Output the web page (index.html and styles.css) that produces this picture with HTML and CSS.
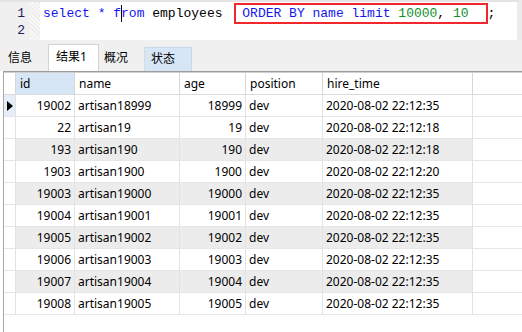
FILE: index.html
```html
<!DOCTYPE html>
<html lang="zh">
<head>
    <meta charset="UTF-8">
    <title>查询结果</title>
    <link rel="stylesheet" href="styles.css">
</head>
<body>
    <div class="editor">
        <div class="gutter">
            <div>1</div>
            <div>2</div>
        </div>
        <div class="fold"></div>
        <div class="code">
            <div class="line"><span class="kw">select</span> <span class="kw">*</span> <span class="kw">f<span class="caret"></span>rom</span> employees <span class="mark"><span class="kw">ORDER BY name limit</span> <span class="num">10000</span>, <span class="num">10</span></span>;</div>
            <div class="line"></div>
        </div>
    </div>

    <div class="tabs">
        <div class="tab">信息</div>
        <div class="tab active">结果1</div>
        <div class="tab plain">概况</div>
        <div class="tab status">状态</div>
    </div>

    <div class="grid">
        <div class="row head">
            <div class="cell ind"></div>
            <div class="cell c-id sel">id</div>
            <div class="cell c-name">name</div>
            <div class="cell c-age">age</div>
            <div class="cell c-pos">position</div>
            <div class="cell c-time">hire_time</div>
        </div>
        <div id="rows"></div>
    </div>

    <script>
        const data = [
            [19002, 'artisan18999', 18999, '2020-08-02 22:12:35'],
            [22, 'artisan19', 19, '2020-08-02 22:12:18'],
            [193, 'artisan190', 190, '2020-08-02 22:12:18'],
            [1903, 'artisan1900', 1900, '2020-08-02 22:12:20'],
            [19003, 'artisan19000', 19000, '2020-08-02 22:12:35'],
            [19004, 'artisan19001', 19001, '2020-08-02 22:12:35'],
            [19005, 'artisan19002', 19002, '2020-08-02 22:12:35'],
            [19006, 'artisan19003', 19003, '2020-08-02 22:12:35'],
            [19007, 'artisan19004', 19004, '2020-08-02 22:12:35'],
            [19008, 'artisan19005', 19005, '2020-08-02 22:12:35']
        ];

        const rows = document.getElementById('rows');
        data.forEach((r, i) => {
            const row = document.createElement('div');
            row.className = 'row';
            if (i >= 2 && i % 2 === 0) row.classList.add('alt');
            row.innerHTML =
                '<div class="cell ind">' + (i === 0 ? '<span class="arrow"></span>' : '') + '</div>' +
                '<div class="cell c-id num-cell">' + r[0] + '</div>' +
                '<div class="cell c-name">' + r[1] + '</div>' +
                '<div class="cell c-age num-cell">' + r[2] + '</div>' +
                '<div class="cell c-pos">dev</div>' +
                '<div class="cell c-time">' + r[3] + '</div>';
            if (i === 0) row.firstChild.classList.add('current');
            rows.appendChild(row);
        });
    </script>
</body>
</html>
```

FILE: styles.css
```css
body {
    margin: 0;
    width: 522px;
    height: 332px;
    overflow: hidden;
    background-color: white;
    font-family: "Noto Sans", "Noto Sans CJK SC", sans-serif;
    font-size: 12px;
    color: #000;
}

.editor {
    display: flex;
    height: 40px;
    box-sizing: border-box;
    border-top: 2px solid #e4e4e4;
    border-right: 5px solid #ececec;
    font-family: "Liberation Mono", monospace;
    font-size: 13px;
}
.gutter {
    width: 29px;
    box-sizing: border-box;
    padding: 3px 4px 0 0;
    background-color: #f0f0f0;
    text-align: right;
    color: #1c1c5c;
}
.gutter div {
    height: 17px;
    line-height: 17px;
}
.fold {
    width: 11px;
    background-color: #f7f7f7;
    background-image: repeating-linear-gradient(45deg, #ececec 0 1px, transparent 1px 3px);
}
.code {
    flex: 1;
    padding: 3px 0 0 3px;
}
.line {
    height: 17px;
    line-height: 17px;
    white-space: pre;
}
.kw {
    color: #1515f0;
}
.num {
    color: #10902a;
}
.caret {
    display: inline-block;
    width: 1px;
    height: 17px;
    margin-right: -1px;
    background-color: #000;
    vertical-align: top;
}
.mark {
    display: inline-block;
    line-height: 17px;
    margin: -2px 0 -2px 4px;
    padding: 0 17px 0 6px;
    border: 2px solid #f0282e;
}

.tabs {
    display: flex;
    align-items: flex-end;
    height: 31px;
    background-color: #f0f0f0;
}
.tab {
    height: 24px;
    line-height: 22px;
    box-sizing: border-box;
    padding-left: 8px;
}
.tab:first-child {
    width: 48px;
}
.tab.active {
    width: 51px;
    height: 27px;
    line-height: 24px;
    padding-left: 7px;
    background-color: white;
    border: 1px solid #d4d4d4;
    border-bottom: none;
}
.tab.plain {
    width: 46px;
    padding-left: 5px;
    border-right: 1px solid #dadada;
}
.tab.status {
    width: 47px;
    padding-left: 6px;
    background-color: #d7e6f6;
    border: 1px solid #c6d8ec;
    border-bottom: none;
    border-left: none;
}

.grid {
    margin-left: 3px;
    height: 261px;
    border-left: 1px solid #a8a8a8;
    border-top: 1px solid #9c9c9c;
}
.row {
    display: flex;
    height: 22px;
    line-height: 21px;
    box-sizing: border-box;
    border-bottom: 1px solid #e6e6e6;
}
.row.head {
    border-top: 1px solid #cfcfcf;
    border-bottom: 1px solid #dadada;
    height: 23px;
}
.row.alt .cell:not(.ind) {
    background-color: #ececec;
}
.cell {
    box-sizing: border-box;
    padding: 0 3px;
    border-right: 1px solid #e3e3e3;
    white-space: nowrap;
}
.head .cell {
    border-right-color: #d6d6d6;
    padding-left: 4px;
}
.cell.sel {
    background-color: #d7e6f6;
}
.ind {
    width: 12px;
    padding: 0;
    position: relative;
}
.ind.current {
    background-color: #e4edf8;
}
.arrow {
    position: absolute;
    left: 3px;
    top: 6px;
    border-left: 6px solid #000;
    border-top: 5px solid transparent;
    border-bottom: 5px solid transparent;
}
.c-id {
    width: 59px;
}
.c-name {
    width: 105px;
}
.c-age {
    width: 66px;
}
.c-pos {
    width: 77px;
}
.c-time {
    width: 150px;
}
.num-cell {
    text-align: right;
}
```
